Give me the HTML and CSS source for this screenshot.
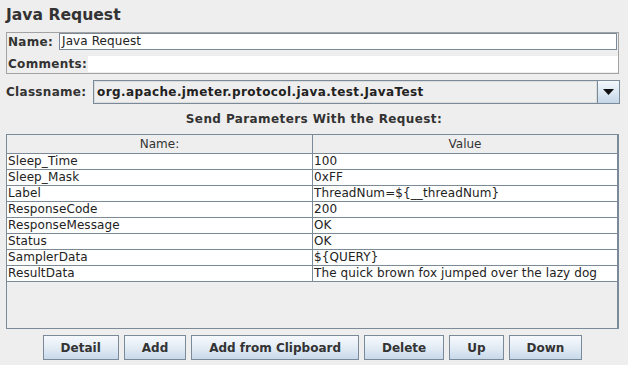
FILE: index.html
```html
<!DOCTYPE html>
<html lang="en">
<head>
    <meta charset="UTF-8">
    <title>Java Request</title>
    <link rel="stylesheet" href="styles.css">
</head>
<body>

    <!-- Title at the top -->
    <h1 class="title">Java Request</h1>

    <!-- Name / comments panel -->
    <div class="name-panel">
        <div class="name-row">
            <label class="label">Name:</label>
            <div class="text-field">Java Request</div>
        </div>
        <div class="comments-row">
            <label class="label">Comments:</label>
            <div class="text-area"></div>
        </div>
    </div>

    <!-- Classname chooser -->
    <div class="class-row">
        <label class="label">Classname:</label>
        <div class="combo">
            <div class="combo-value">org.apache.jmeter.protocol.java.test.JavaTest</div>
            <div class="combo-button">
                <svg width="11" height="6" viewBox="0 0 11 6"><polygon points="0,0 11,0 5.5,6" fill="#111"/></svg>
            </div>
        </div>
    </div>

    <h2 class="params-title">Send Parameters With the Request:</h2>

    <!-- Parameters table -->
    <div class="scroll-pane">
        <table class="params">
            <thead>
                <tr><th class="col-name">Name:</th><th>Value</th></tr>
            </thead>
            <tbody>
                <tr><td>Sleep_Time</td><td>100</td></tr>
                <tr><td>Sleep_Mask</td><td>0xFF</td></tr>
                <tr><td>Label</td><td>ThreadNum=${__threadNum}</td></tr>
                <tr><td>ResponseCode</td><td>200</td></tr>
                <tr><td>ResponseMessage</td><td>OK</td></tr>
                <tr><td>Status</td><td>OK</td></tr>
                <tr><td>SamplerData</td><td>${QUERY}</td></tr>
                <tr><td>ResultData</td><td>The quick brown fox jumped over the lazy dog</td></tr>
            </tbody>
        </table>
    </div>

    <!-- Buttons along the bottom -->
    <div class="buttons">
        <button class="btn">Detail</button>
        <button class="btn">Add</button>
        <button class="btn">Add from Clipboard</button>
        <button class="btn">Delete</button>
        <button class="btn">Up</button>
        <button class="btn">Down</button>
    </div>

</body>
</html>
```

FILE: styles.css
```css
body {
    margin: 0;
    background: #eeeeee;
    font-family: "DejaVu Sans", Verdana, sans-serif;
    font-size: 12px;
    color: #333333;
    width: 628px;
    height: 365px;
    overflow: hidden;
}

.title {
    font-size: 15.6px;
    font-weight: bold;
    margin: 0;
    padding: 5px 0 0 6px;
    height: 27px;
    box-sizing: border-box;
    line-height: 20px;
}

.label {
    font-weight: bold;
    white-space: nowrap;
    letter-spacing: 0.3px;
}

/* Name and comments box */
.name-panel {
    margin-left: 6px;
    width: 613px;
    height: 42px;
    box-sizing: border-box;
    border: 1px solid #a3a3a3;
    margin-top: 5px;
}

.name-row {
    display: flex;
    align-items: center;
    height: 17px;
    padding-left: 1px;
}

.name-row .label {
    width: 51px;
}

.text-field {
    flex: 1;
    height: 17px;
    box-sizing: border-box;
    border: 1px solid #7a8a99;
    background: white;
    margin-right: 1px;
    padding-left: 2px;
    line-height: 15px;
    color: #222;
    letter-spacing: 0.1px;
}

.comments-row {
    display: flex;
    align-items: flex-end;
    margin-top: 6px;
    height: 16px;
    padding-left: 1px;
}

.comments-row .label {
    width: 80px;
    line-height: 15px;
}

.text-area {
    flex: 1;
    height: 16px;
    background: white;
}

/* Classname combo */
.class-row {
    display: flex;
    align-items: center;
    margin: 6px 0 0 6px;
    height: 24px;
}

.class-row .label {
    width: 87px;
}

.combo {
    display: flex;
    width: 527px;
    height: 24px;
    box-sizing: border-box;
    border: 1px solid #7a8a99;
    background: #eeeeee;
}

.combo-value {
    flex: 1;
    border: 1px solid #dcdcdc;
    font-weight: bold;
    padding-left: 2px;
    line-height: 20px;
    color: #222;
    letter-spacing: 0.4px;
}

.combo-button {
    width: 21px;
    border-left: 1px solid #7a8a99;
    background: linear-gradient(#f4f8fb, #dde8f3 50%, #c4d6e8);
    display: flex;
    align-items: center;
    justify-content: center;
}

.params-title {
    font-size: 12px;
    font-weight: bold;
    text-align: center;
    margin: 0;
    height: 30px;
    line-height: 30px;
    letter-spacing: 0.4px;
}

/* Table inside the scroll pane */
.scroll-pane {
    margin-left: 6px;
    width: 613px;
    height: 195px;
    box-sizing: border-box;
    border-top: 1px solid #7a8a99;
    border-left: 1px solid #7a8a99;
    border-right: 2px solid #7a8a99;
    border-bottom: 1px solid #7a8a99;
    background: #eeeeee;
}

.params {
    width: 100%;
    border-collapse: collapse;
    table-layout: fixed;
}

.params th {
    font-weight: normal;
    height: 18px;
    line-height: 18px;
    padding: 0;
    background: #eeeeee;
    border-right: 1px solid #7a8a99;
    border-bottom: 1px solid #7a8a99;
    text-align: center;
}

.params th:last-child,
.params td:last-child {
    border-right: none;
}

.params .col-name {
    width: 305px;
}

.params td {
    height: 15px;
    line-height: 15px;
    padding: 0 0 0 1px;
    background: white;
    color: #222;
    border-right: 1px solid #7a8a99;
    border-bottom: 1px solid #7a8a99;
    white-space: nowrap;
    overflow: hidden;
    letter-spacing: 0.1px;
}

/* Bottom buttons */
.buttons {
    display: flex;
    justify-content: center;
    gap: 5px;
    width: 625px;
    margin-top: 6px;
}

.btn {
    font-family: "DejaVu Sans", Verdana, sans-serif;
    font-size: 12px;
    font-weight: bold;
    color: #333333;
    height: 25px;
    padding: 0 17px;
    border: 1px solid #7a8a99;
    border-radius: 0;
    background: linear-gradient(#f6f9fc, #e3ecf5 50%, #c8d9ea);
}
```
